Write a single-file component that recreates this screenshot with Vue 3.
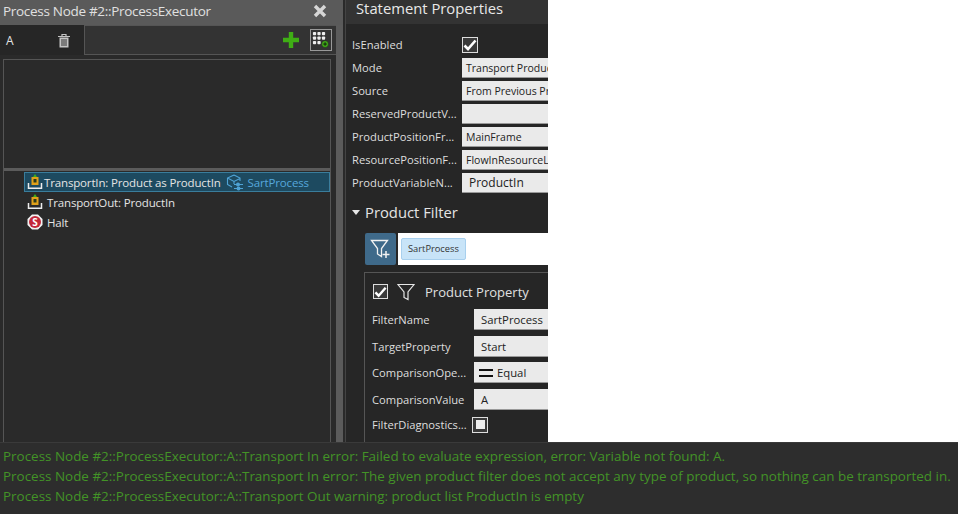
<script setup>
const log = [
  'Process Node #2::ProcessExecutor::A::Transport In error: Failed to evaluate expression, error: Variable not found: A.',
  'Process Node #2::ProcessExecutor::A::Transport In error: The given product filter does not accept any type of product, so nothing can be transported in.',
  'Process Node #2::ProcessExecutor::A::Transport Out warning: product list ProductIn is empty'
]
const props = [
  ['Mode', 'Transport Produc', 'r-mode'],
  ['Source', 'From Previous Pr', 'r-src'],
  ['ReservedProductV...', '', 'r-res'],
  ['ProductPositionFr...', 'MainFrame', 'r-ppos'],
  ['ResourcePositionF...', 'FlowInResourceL', 'r-rpos'],
  ['ProductVariableN...', 'ProductIn', 'r-var']
]
const filterProps = [
  ['FilterName', 'SartProcess'],
  ['TargetProperty', 'Start'],
  ['ComparisonOpe...', 'Equal', true],
  ['ComparisonValue', 'A']
]
</script>

<template>
  <div class="app">
    <div class="top">
      <section class="left">
        <header class="lhead">
          <span>Process Node #2::ProcessExecutor</span>
          <svg class="close" width="14" height="14" viewBox="0 0 14 14"><path d="M2 2l10 10M12 2L2 12" stroke="#d6d6d6" stroke-width="3.4"/></svg>
        </header>
        <div class="lmain">
          <div class="lcol">
            <div class="tabs">
              <div class="tab">
                <span>A</span>
                <svg width="14" height="15" viewBox="0 0 14 15" fill="none" stroke="#c4c4c4"><path d="M1 3.500h12M5 3.500V1.500h4v2" stroke-width="1.200"/><path d="M2.500 4.500h9v10h-9z" fill="#c4c4c4" stroke="none"/><path d="M5 6v7M7 6v7M9 6v7" stroke="#333" stroke-width="1"/></svg>
              </div>
              <div class="tabrest">
                <svg width="16" height="16" viewBox="0 0 16 16"><path d="M8 0v16M0 8h16" stroke="#3fae15" stroke-width="4.400"/></svg>
                <span class="gridbtn">
                  <svg width="18" height="18" viewBox="0 0 20 20" fill="#eee">
                    <rect x="1" y="1" width="3.600" height="3.600" rx="1"/><rect x="6" y="1" width="3.600" height="3.600" rx="1"/><rect x="11" y="1" width="3.600" height="3.600" rx="1"/>
                    <rect x="1" y="6" width="3.600" height="3.600" rx="1"/><rect x="6" y="6" width="3.600" height="3.600" rx="1"/><rect x="11" y="6" width="3.600" height="3.600" rx="1"/>
                    <rect x="1" y="11" width="3.600" height="3.600" rx="1"/><rect x="6" y="11" width="3.600" height="3.600" rx="1"/>
                    <circle cx="14.500" cy="14.500" r="3.800" fill="#3fae15" stroke="#222" stroke-width=".6"/><path d="M14.500 12.500v4M12.500 14.500h4" stroke="#111" stroke-width="1"/>
                  </svg>
                </span>
              </div>
            </div>
            <div class="lbody">
              <div class="listbox">
                <div class="upper"></div>
                <div class="split"></div>
                <div class="rows">
                  <div class="row sel">
                    <svg class="ic" width="16" height="16" viewBox="0 0 16 16"><path d="M1.500 9v5.300h13V9" fill="none" stroke="#ececec" stroke-width="1.500"/><rect x="4.500" y="3" width="7" height="8" fill="#e0a11a"/><rect x="6.500" y="5" width="3" height="3.500" fill="#2c3a1a"/><path d="M8 0L10 3H6z" fill="#3fae15"/></svg>
                    <span>TransportIn: Product as ProductIn</span>
                    <svg class="cube" width="18" height="17" viewBox="0 0 18 17" fill="none" stroke="#4fa3d6" stroke-width="1.100"><path d="M8 1l6 3v3M8 1L1.500 4v6.500L6 13M1.500 4L8 7.500l6-3M8 7.500V10"/><path d="M8 10.500h9M8 14.500h9"/><circle cx="12" cy="10.500" r="1.400" fill="#4fa3d6"/><circle cx="12.500" cy="14.500" r="1.400" fill="#4fa3d6"/></svg>
                    <span class="blue">SartProcess</span>
                  </div>
                  <div class="row">
                    <svg class="ic" width="16" height="16" viewBox="0 0 16 16"><path d="M1.500 9v5.300h13V9" fill="none" stroke="#ececec" stroke-width="1.500"/><rect x="4.500" y="3" width="7" height="8" fill="#e0a11a"/><rect x="6.500" y="5" width="3" height="3.500" fill="#2c3a1a"/><path d="M8 0L10 3H6z" fill="#3fae15"/></svg>
                    <span>TransportOut: ProductIn</span>
                  </div>
                  <div class="row">
                    <svg class="ic" width="16" height="16" viewBox="0 0 16 16"><path d="M5 .5h6L15.500 5v6L11 15.500H5L.5 11V5z" fill="#f2f2f2"/><circle cx="8" cy="8" r="6" fill="#c3283a"/><text x="8" y="11.500" text-anchor="middle" class="stxt">S</text></svg>
                    <span>Halt</span>
                  </div>
                </div>
              </div>
            </div>
          </div>
          <i class="thumb"></i>
        </div>
      </section>
      <section class="right">
        <h2 class="title">Statement Properties</h2>
        <div class="props">
          <div class="prop">
            <label>IsEnabled</label>
            <span class="check on"><svg width="14" height="12" viewBox="0 0 14 12"><path d="M1.500 6.500l3.500 3.500 7.500-8.500" fill="none" stroke="#fff" stroke-width="2.600"/></svg></span>
          </div>
          <div v-for="p in props" :key="p[0]" class="prop" :class="p[2]">
            <label>{{ p[0] }}</label>
            <div class="field">{{ p[1] }}</div>
          </div>
        </div>
        <div class="section">
          <span class="tri"></span><span>Product Filter</span>
        </div>
        <div class="filterbar">
          <button class="fbtn">
            <svg width="22" height="22" viewBox="0 0 22 22" fill="none" stroke="#f2f2f2" stroke-width="1.300"><path d="M1.500 2.500h16l-6 8v8l-4-2.500v-5.500z"/><path d="M16 13v7M12.500 16.500h7" stroke-width="1.500"/></svg>
          </button>
          <div class="chipbox"><span class="chip">SartProcess</span></div>
        </div>
        <div class="card">
          <div class="cardhead">
            <span class="check on big"><svg width="14" height="12" viewBox="0 0 14 12"><path d="M1.500 6.500l3.500 3.500 7.500-8.500" fill="none" stroke="#fff" stroke-width="2.600"/></svg></span>
            <svg class="funnel" width="18" height="18" viewBox="0 0 18 18" fill="none" stroke="#e6e6e6" stroke-width="1.200"><path d="M1 1.500h16l-6 7.500v7.500l-4-2v-5.500z"/></svg>
            <span class="cardtitle">Product Property</span>
          </div>
          <div v-for="p in filterProps" :key="p[0]" class="prop fprop">
            <label>{{ p[0] }}</label>
            <div class="field">
              <svg v-if="p[2]" class="eq" width="14" height="8" viewBox="0 0 14 8"><path d="M0 1h14M0 7h14" stroke="#111" stroke-width="2"/></svg>{{ p[1] }}
            </div>
          </div>
          <div class="prop fprop diag">
            <label>FilterDiagnostics...</label>
            <span class="check"><i></i></span>
          </div>
        </div>
      </section>
      <div class="white"></div>
    </div>
    <footer class="log">
      <div v-for="(l, i) in log" :key="i">{{ l }}</div>
    </footer>
  </div>
</template>

<style>
html, body { margin: 0; background: #2d2d2d; overflow: hidden; }
</style>

<style scoped>
.app { width: 958px; height: 514px; display: flex; flex-direction: column; background: #2a2a2a; font-family: "Open Sans", "Noto Sans", sans-serif; color: #e4e4e4; font-size: 12px; overflow: hidden; }
.top { display: flex; height: 442px; flex: none; }
.left { width: 343px; flex: none; display: flex; flex-direction: column; margin-right: 2px; }
.lhead { height: 25px; flex: none; background: #5a5a5a; display: flex; align-items: center; justify-content: space-between; padding: 0 16px 3px 3px; font-size: 13.500px; letter-spacing: -.3px; color: #e0e0e0; box-sizing: border-box; }
.lmain { flex: 1; display: flex; min-height: 0; }
.lcol { width: 336px; flex: none; display: flex; flex-direction: column; }
.thumb { width: 7px; flex: none; background: #5b5b5b; }
.tabs { height: 30px; flex: none; display: flex; background: #2d2d2d; }
.tab { width: 84px; flex: none; background: #262626; display: flex; align-items: center; justify-content: space-between; padding: 0 13px 0 6px; box-sizing: border-box; }
.tabrest { flex: 1; background: #333; border-top: 1px solid #555; border-left: 1px solid #555; border-bottom: 1px solid #555; display: flex; align-items: center; justify-content: flex-end; gap: 11px; padding-right: 4px; box-sizing: border-box; }
.gridbtn { width: 20px; height: 20px; border: 1px solid #999; display: flex; align-items: center; justify-content: center; }
.lbody { flex: 1; display: flex; padding: 4px 5px 0 3px; background: #2a2a2a; min-height: 0; }
.listbox { flex: 1; border: 1px solid #555; border-bottom: 0; display: flex; flex-direction: column; }
.upper { height: 108px; flex: none; }
.split { height: 3px; flex: none; background: #5b5b5b; }
.rows { padding: 1px 0 0 20px; }
.row { height: 20px; display: flex; align-items: center; font-size: 11.500px; letter-spacing: -.15px; padding-left: 3px; white-space: nowrap; }
.row .ic { margin-right: 4px; flex: none; }
.row.sel { background: #1d4a60; outline: 1px solid #3a7d9c; outline-offset: -1px; }
.row.sel .ic { margin-right: 1px; }
.cube { margin: 0 4px 0 5px; flex: none; }
.blue { color: #56a7dc; }
.stxt { font-size: 10px; font-weight: 700; fill: #fff; font-family: "Open Sans", sans-serif; }
.right { width: 203px; flex: none; background: #262626; overflow: hidden; border-left: 1px solid #444; box-sizing: border-box; }
.title { margin: 0; height: 24px; line-height: 16px; font-weight: 400; font-size: 14.800px; color: #e8e8e8; background: #333; padding-left: 10px; }
.props { padding: 9px 0 0 6px; }
.prop { display: flex; align-items: center; height: 23px; white-space: nowrap; }
.prop label { width: 110px; flex: none; font-size: 11.200px; color: #dedede; }
.field { width: 160px; flex: none; height: 20px; line-height: 20px; box-sizing: border-box; background: #eaeaea; color: #222; font-size: 10.500px; padding-left: 4px; overflow: hidden; border-bottom: 1px solid #999; }
.check { width: 14px; height: 14px; border: 1.500px solid #ddd; display: flex; align-items: center; justify-content: center; flex: none; box-sizing: content-box; background: #3a3a3a; }
.check i { width: 9px; height: 9px; background: #eee; display: block; }
.r-var .field { padding-left: 7px; font-size: 12px; }
.section { display: flex; align-items: center; gap: 5px; font-size: 14.800px; margin: 2px 0 0 6px; height: 32px; }
.tri { width: 0; height: 0; border: 4px solid transparent; border-top: 5px solid #e6e6e6; border-bottom: 0; }
.filterbar { display: flex; margin: 5px 0 0 19px; height: 32px; gap: 2px; }
.fbtn { width: 31px; height: 32px; flex: none; background: #3f6a8a; border: 0; padding: 0; display: flex; align-items: center; justify-content: center; border-radius: 2px; }
.chipbox { width: 200px; background: #fff; display: flex; align-items: center; padding-left: 3px; }
.chip { background: #c8e4f8; color: #333; border: 1px solid #a8d0ee; border-radius: 2px; font-size: 9.300px; padding: 3px 6px 4px; }
.card { margin: 7px 0 0 18px; border: 1px solid #555; width: 260px; padding: 0 0 0 7px; box-sizing: border-box; height: 180px; }
.cardhead { display: flex; align-items: center; height: 33.500px; box-sizing: border-box; padding: 4px 0 0 1px; gap: 9px; }
.check.big { width: 13px; height: 13px; }
.cardtitle { font-size: 13px; margin-left: 1px; color: #e0e0e0; }
.fprop { height: 26.500px; }
.fprop label { width: 102px; }
.fprop .field { height: 21px; line-height: 21px; font-size: 11.300px; padding-left: 7px; }
.eq { margin-right: 4px; margin-left: -2px; }
.diag { height: 24px; }
.diag label { width: 100px; }
.white { flex: 1; background: #fff; }
.log { flex: 1; background: #2d2d2d; border-top: 1px solid #3a3a3a; padding: 3px 0 0 3px; font-size: 13.450px; line-height: 20px; color: #439327; white-space: nowrap; box-sizing: border-box; }
</style>
